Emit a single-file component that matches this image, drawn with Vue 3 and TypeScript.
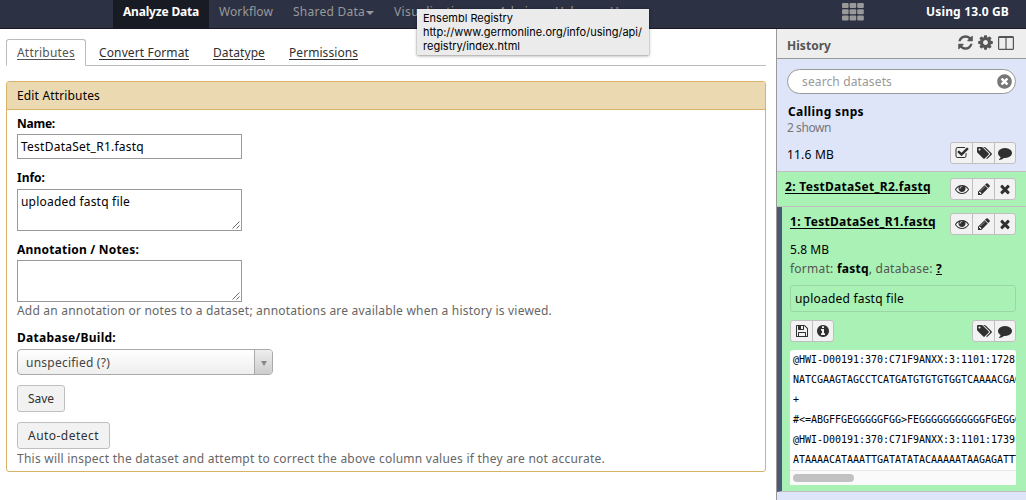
<script setup lang="ts">
import { ref, type Directive } from 'vue'

interface Fit { width: number }

/* Tracks a run of text so that it spans the given number of pixels. */
const vFit: Directive<HTMLElement, number> = {
  mounted(el, { value }) {
    const range = document.createRange()
    range.selectNodeContents(el)
    const count = (el.textContent ?? '').length
    const natural = range.getBoundingClientRect().width
    el.style.letterSpacing = `${((value - natural) / count).toFixed(3)}px`
  },
}

interface NavItem extends Fit { label: string; active?: boolean; caret?: boolean }
const nav: NavItem[] = [
  { label: 'Analyze Data', width: 76, active: true },
  { label: 'Workflow', width: 54 },
  { label: 'Shared Data', width: 72, caret: true },
  { label: 'Visualization', width: 76, caret: true },
  { label: 'Admin', width: 36 },
  { label: 'Help', width: 26, caret: true },
  { label: 'User', width: 25, caret: true },
]

interface Tab extends Fit { label: string; active?: boolean }
const tabs: Tab[] = [
  { label: 'Attributes', width: 58, active: true },
  { label: 'Convert Format', width: 90 },
  { label: 'Datatype', width: 52 },
  { label: 'Permissions', width: 69 },
]

const icons = {
  check: 'M1472 930v318q0 119-84.5 203.5t-203.5 84.5h-832q-119 0-203.5-84.5t-84.5-203.5v-832q0-119 84.5-203.5t203.5-84.5h832q63 0 117 25 15 7 18 23 3 17-9 29l-49 49q-10 10-23 10-3 0-9-2-23-6-45-6h-832q-66 0-113 47t-47 113v832q0 66 47 113t113 47h832q66 0 113-47t47-113v-254q0-13 9-22l64-64q10-10 23-10 6 0 12 3 20 8 20 29zm231-489l-814 814q-24 24-57 24t-57-24l-430-430q-24-24-24-57t24-57l110-110q24-24 57-24t57 24l263 263 647-647q24-24 57-24t57 24l110 110q24 24 24 57t-24 57z',
  tags: 'M576 448q0-53-37.5-90.5t-90.5-37.5-90.5 37.5-37.5 90.5 37.5 90.5 90.5 37.5 90.5-37.5 37.5-90.5zm1067 576q0 53-37 90l-491 492q-39 37-91 37-53 0-90-37l-715-716q-38-37-64.5-101t-26.5-117v-416q0-52 38-90t90-38h416q53 0 117 26.5t102 64.5l715 714q37 39 37 91zm384 0q0 53-37 90l-491 492q-39 37-91 37-36 0-59-14t-53-45l470-470q37-37 37-90 0-52-37-91l-715-714q-38-38-102-64.5t-117-26.5h224q53 0 117 26.5t102 64.5l715 714q37 39 37 91z',
  comment: 'M1792 896q0 174-120 321.5t-326 233-450 85.5q-70 0-145-8-198 175-460 242-49 14-114 22-17 2-30.5-9t-17.5-29v-1q-3-4-.5-12t2-10 4.5-9.5l6-9 7-8.5 8-9q7-8 31-34.5t34.5-38 31-39.5 32.5-51 27-59 26-76q-157-89-247.5-220t-90.5-281q0-174 120-321.5t326-233 450-85.5 450 85.5 326 233 120 321.5z',
  eye: 'M1664 960q-152-236-381-353 61 104 61 225 0 185-131.5 316.5t-316.5 131.5-316.5-131.5-131.5-316.5q0-121 61-225-229 117-381 353 133 205 333.5 326.5t434.5 121.5 434.5-121.5 333.5-326.5zm-720-384q0-20-14-34t-34-14q-125 0-214.5 89.5t-89.5 214.5q0 20 14 34t34 14 34-14 14-34q0-86 61-147t147-61q20 0 34-14t14-34zm848 384q0 34-20 69-140 230-376.5 368.5t-499.5 138.5-499.5-139-376.5-368q-20-35-20-69t20-69q140-229 376.5-368t499.5-139 499.5 139 376.5 368q20 35 20 69z',
  pencil: 'M491 1536l91-91-235-235-91 91v107h128v128h107zm523-928q0-22-22-22-10 0-17 7l-542 542q-7 7-7 17 0 22 22 22 10 0 17-7l542-542q7-7 7-17zm-54-192l416 416-832 832h-416v-416zm683 96q0 53-37 90l-166 166-416-416 166-165q36-38 90-38 53 0 91 38l235 234q37 39 37 91z',
  times: 'M1490 1322q0 40-28 68l-136 136q-28 28-68 28t-68-28l-294-294-294 294q-28 28-68 28t-68-28l-136-136q-28-28-28-68t28-68l294-294-294-294q-28-28-28-68t28-68l136-136q28-28 68-28t68 28l294 294 294-294q28-28 68-28t68 28l136 136q28 28 28 68t-28 68l-294 294 294 294q28 28 28 68z',
  save: 'M512 1536h768v-384h-768v384zm896 0h128v-896q0-14-10-38.5t-20-34.5l-281-281q-10-10-34-20t-39-10v416q0 40-28 68t-68 28h-576q-40 0-68-28t-28-68v-416h-128v1280h128v-416q0-40 28-68t68-28h832q40 0 68 28t28 68v416zm-384-928v-320q0-13-9.5-22.5t-22.5-9.5h-192q-13 0-22.5 9.5t-9.5 22.5v320q0 13 9.5 22.5t22.5 9.5h192q13 0 22.5-9.5t9.5-22.5zm640 32v928q0 40-28 68t-68 28h-1344q-40 0-68-28t-28-68v-1344q0-40 28-68t68-28h928q40 0 88 20t76 48l280 280q28 28 48 76t20 88z',
  info: 'M1152 1376v-160q0-14-9-23t-23-9h-96v-512q0-14-9-23t-23-9h-320q-14 0-23 9t-9 23v160q0 14 9 23t23 9h96v320h-96q-14 0-23 9t-9 23v160q0 14 9 23t23 9h448q14 0 23-9t9-23zm-128-896v-160q0-14-9-23t-23-9h-192q-14 0-23 9t-9 23v160q0 14 9 23t23 9h192q14 0 23-9t9-23zm640 416q0 209-103 385.5t-279.5 279.5-385.5 103-385.5-103-279.5-279.5-103-385.5 103-385.5 279.5-279.5 385.5-103 385.5 103 279.5 279.5 103 385.5z',
  clear: 'M1277 1122q0-26-19-45l-181-181 181-181q19-19 19-45 0-27-19-46l-90-90q-19-19-46-19-26 0-45 19l-181 181-181-181q-19-19-45-19-27 0-46 19l-90 90q-19 19-19 46 0 26 19 45l181 181-181 181q-19 19-19 45 0 27 19 46l90 90q19 19 46 19 26 0 45-19l181-181 181 181q19 19 45 19 27 0 46-19l90-90q19-19 19-46zm387-226q0 209-103 385.5t-279.5 279.5-385.5 103-385.5-103-279.5-279.5-103-385.5 103-385.5 279.5-279.5 385.5-103 385.5 103 279.5 279.5 103 385.5z',
  refresh: 'M1639 1056q0 5-1 7-64 268-268 434.5t-478 166.5q-146 0-282.5-55t-243.5-157l-129 129q-19 19-45 19t-45-19-19-45v-448q0-26 19-45t45-19h448q26 0 45 19t19 45-19 45l-137 137q71 66 161 102t187 36q134 0 250-65t186-179q11-17 53-117 8-23 30-23h192q13 0 22.5 9.5t9.5 22.5zm25-800v448q0 26-19 45t-45 19h-448q-26 0-45-19t-19-45 19-45l138-138q-148-137-349-137-134 0-250 65t-186 179q-11 17-53 117-8 23-30 23h-199q-13 0-22.5-9.5t-9.5-22.5v-7q65-268 270-434.5t480-166.5q146 0 284 55.5t245 156.5l130-129q19-19 45-19t45 19 19 45z',
  cog: 'M1152 896q0-106-75-181t-181-75-181 75-75 181 75 181 181 75 181-75 75-181zm512-109v222q0 12-8 23t-20 13l-185 28q-19 54-39 91 35 50 107 138 10 12 10 25t-9 23q-27 37-99 108t-94 71q-12 0-26-9l-138-108q-44 23-91 38-16 136-29 186-7 28-36 28h-222q-14 0-24.5-8.500t-11.500-21.500l-28-184q-49-16-90-37l-141 107q-10 9-25 9-14 0-25-11-126-114-165-168-7-10-7-23 0-12 8-23 15-21 51-66.500t54-70.500q-27-50-41-99l-183-27q-13-2-21-12.500t-8-23.500v-222q0-12 8-23t19-13l186-28q14-46 39-92-40-57-107-138-10-12-10-24 0-10 9-23 26-36 98.500-107.500t94.500-71.500q13 0 26 10l138 107q44-23 91-38 16-136 29-186 7-28 36-28h222q14 0 24.500 8.500t11.500 21.500l28 184q49 16 90 37l142-107q9-9 24-9 13 0 25 10 129 119 165 170 7 8 7 22 0 12-8 23-15 21-51 66.500t-54 70.500q26 50 41 98l183 28q13 2 21 12.500t8 23.500z',
} as const
type IconName = keyof typeof icons

const viewBox = (name: IconName): string => (name === 'tags' ? '0 0 2048 1792' : '0 0 1792 1792')

const historyActions: IconName[] = ['check', 'tags', 'comment']
const datasetActions: IconName[] = ['eye', 'pencil', 'times']
const fileActions: IconName[] = ['save', 'info']
const noteActions: IconName[] = ['tags', 'comment']

const name = ref('TestDataSet_R1.fastq')
const info = ref('uploaded fastq file')

const preview: string[] = [
  '@HWI-D00191:370:C71F9ANXX:3:1101:1728',
  'NATCGAAGTAGCCTCATGATGTGTGTGGTCAAAACGAG',
  '+',
  '#<=ABGFFGEGGGGGFGG>FEGGGGGGGGGGGFGEGGG',
  '@HWI-D00191:370:C71F9ANXX:3:1101:1739',
  'ATAAAACATAAATTGATATATACAAAAATAAGAGATTT',
]
</script>

<template>
  <div class="app">
    <header class="masthead">
      <nav class="nav">
        <a v-for="item in nav" :key="item.label" class="nav-item" :class="{ active: item.active }">
          <span v-fit="item.width">{{ item.label }}</span><i v-if="item.caret" class="caret"></i>
        </a>
      </nav>
      <svg class="grid-icon" width="22" height="18" viewBox="0 0 22 18">
        <template v-for="row in 3" :key="row">
          <rect v-for="col in 3" :key="col" :x="(col - 1) * 7.6" :y="(row - 1) * 6.2" width="6.6" height="5" rx="1" />
        </template>
      </svg>
      <span v-fit="83" class="quota">Using 13.0 GB</span>
    </header>

    <div class="body">
      <main class="center">
        <div class="tabs">
          <a v-for="tab in tabs" :key="tab.label" class="tab" :class="{ active: tab.active }"><span v-fit="tab.width">{{ tab.label }}</span></a>
        </div>

        <section class="form">
          <h1 class="form-title"><span v-fit="83">Edit Attributes</span></h1>
          <div class="form-body">
            <label class="label"><span v-fit="38">Name:</span></label>
            <div class="field input"><span v-fit="123">{{ name }}</span></div>

            <label class="label label-info"><span v-fit="28">Info:</span></label>
            <div class="field area">
              <span v-fit="109">{{ info }}</span>
              <svg class="grip" width="8" height="8" viewBox="0 0 8 8"><path d="M0.5 7.5l7-7M4.5 7.5l3-3" /></svg>
            </div>

            <label class="label label-note"><span v-fit="122">Annotation / Notes:</span></label>
            <div class="field area">
              <svg class="grip" width="8" height="8" viewBox="0 0 8 8"><path d="M0.5 7.5l7-7M4.5 7.5l3-3" /></svg>
            </div>
            <p class="help"><span v-fit="535">Add an annotation or notes to a dataset; annotations are available when a history is viewed.</span></p>

            <label class="label label-build"><span v-fit="99">Database/Build:</span></label>
            <div class="select">
              <span class="select-value"><span v-fit="84">unspecified (?)</span></span>
              <span class="select-arrow"><i></i></span>
            </div>

            <button class="button"><span v-fit="26">Save</span></button>
            <button class="button detect"><span v-fit="71">Auto-detect</span></button>
            <p class="help"><span v-fit="588">This will inspect the dataset and attempt to correct the above column values if they are not accurate.</span></p>
          </div>
        </section>
      </main>

      <aside class="history">
        <div class="history-head">
          <b v-fit="44">History</b>
          <div class="head-icons">
            <svg width="17" height="17" :viewBox="viewBox('refresh')"><path :d="icons.refresh" /></svg>
            <svg width="17" height="17" :viewBox="viewBox('cog')"><path :d="icons.cog" /></svg>
            <svg class="columns" width="16" height="14" viewBox="0 0 16 14">
              <path d="M1.500 0h13a1.500 1.500 0 0 1 1.500 1.500v11a1.500 1.500 0 0 1-1.500 1.500h-13a1.500 1.500 0 0 1-1.500-1.500v-11a1.500 1.500 0 0 1 1.500-1.500zM1.200 2v10.800h6.200v-10.800zM8.600 2v10.800h6.200v-10.800z" fill-rule="evenodd" />
            </svg>
          </div>
        </div>

        <div class="summary">
          <div class="search">
            <span v-fit="90">search datasets</span>
            <svg width="17" height="17" :viewBox="viewBox('clear')"><path :d="icons.clear" /></svg>
          </div>
          <div class="history-name"><b v-fit="76">Calling snps</b></div>
          <div class="shown"><span v-fit="44">2 shown</span></div>
          <div class="size-row">
            <span v-fit="47">11.6 MB</span>
            <div class="group">
              <span v-for="icon in historyActions" :key="icon" class="cell">
                <svg class="icon" :class="icon" :viewBox="viewBox(icon)"><path :d="icons[icon]" /></svg>
              </span>
            </div>
          </div>
        </div>

        <article class="dataset">
          <div class="dataset-head">
            <a v-fit="146" class="dataset-title">2: TestDataSet_R2.fastq</a>
            <div class="group">
              <span v-for="icon in datasetActions" :key="icon" class="cell">
                <svg class="icon" :class="icon" :viewBox="viewBox(icon)"><path :d="icons[icon]" /></svg>
              </span>
            </div>
          </div>
        </article>

        <article class="dataset selected">
          <div class="dataset-head">
            <a v-fit="146" class="dataset-title">1: TestDataSet_R1.fastq</a>
            <div class="group">
              <span v-for="icon in datasetActions" :key="icon" class="cell">
                <svg class="icon" :class="icon" :viewBox="viewBox(icon)"><path :d="icons[icon]" /></svg>
              </span>
            </div>
          </div>
          <div class="dataset-size"><span v-fit="39">5.8 MB</span></div>
          <div class="meta"><span v-fit="152">format: <b>fastq</b>, database: <b class="link">?</b></span></div>
          <div class="blurb"><span v-fit="109">{{ info }}</span></div>
          <div class="actions">
            <div class="group">
              <span v-for="icon in fileActions" :key="icon" class="cell">
                <svg class="icon" :class="icon" :viewBox="viewBox(icon)"><path :d="icons[icon]" /></svg>
              </span>
            </div>
            <div class="group">
              <span v-for="icon in noteActions" :key="icon" class="cell">
                <svg class="icon" :class="icon" :viewBox="viewBox(icon)"><path :d="icons[icon]" /></svg>
              </span>
            </div>
          </div>
          <div class="preview">
            <div v-for="(line, i) in preview" :key="i" class="line">{{ line }}</div>
            <div class="track"><i></i></div>
          </div>
        </article>
      </aside>
    </div>

    <div class="tooltip">
      <div><span v-fit="90">Ensembl Registry</span></div>
      <div><span v-fit="219">http://www.germonline.org/info/using/api/</span></div>
      <div><span v-fit="97">registry/index.html</span></div>
    </div>
  </div>
</template>

<style>
body {
  margin: 0;
  overflow: hidden;
}
</style>

<style scoped>
.app {
  position: relative;
  display: flex;
  flex-direction: column;
  width: 1026px;
  height: 500px;
  overflow: hidden;
  background: #fff;
  color: #000;
  font: 12px/16px "Noto Sans", "Open Sans", sans-serif;
  white-space: nowrap;
}
.app *, .app { box-sizing: border-box; }
svg { display: block; flex: none; }

.masthead {
  display: flex;
  flex: none;
  height: 29px;
  padding-right: 17px;
  border-bottom: 1px solid #191a24;
  background: #2c3143;
}
.nav { display: flex; width: 729px; margin-left: 113px; }
.nav-item {
  display: flex;
  align-items: flex-start;
  height: 28px;
  padding: 4px 10px 0;
  color: #999;
}
.nav-item.active { background: #191b24; color: #fff; font-weight: bold; }
.caret {
  margin: 7px 0 0 1px;
  border: 4px solid transparent;
  border-top-color: #999;
  border-bottom: 0;
}
.grid-icon { margin-top: 3px; fill: #999; }
.quota { margin: 4px 0 0 auto; color: #fff; font-weight: bold; width: 83px; }

.body { display: flex; flex: 1; min-height: 0; }
.center { width: 776px; padding: 10px 10px 0 6px; }
.tabs { display: flex; height: 27px; border-bottom: 1px solid #bbb; }
.tab {
  height: 27px;
  padding: 6px 12px 0;
  color: #303030;
  text-decoration: underline;
  text-underline-offset: 2px;
}
.tab.active {
  height: 27px;
  padding: 5px 10px 0;
  margin-right: 1px;
  border: 1px solid #bbb;
  border-bottom-color: #fff;
  border-radius: 3px 3px 0 0;
  background: #fff;
  color: #555;
}

.form {
  height: 391px;
  margin-top: 15px;
  border: 1px solid #d8b365;
  border-radius: 3px;
}
.form-title {
  height: 28px;
  margin: 0;
  padding: 6px 10px 0;
  border-bottom: 1px solid #d8b365;
  border-radius: 2px 2px 0 0;
  background: #ebd9b2;
  font: inherit;
}
.form-body { display: flex; flex-direction: column; align-items: flex-start; padding: 6px 10px 0; }
.label { height: 16px; margin-bottom: 2px; font-weight: bold; }
.label-info { margin: 11px 0 3px; }
.label-note { margin: 11px 0 2px; }
.label-build { margin: 11px 0 3px; }
.field {
  position: relative;
  width: 225px;
  border: 1px solid #999;
  padding: 4px 3px;
}
.input { height: 25px; }
.area { height: 42px; }
.grip {
  position: absolute;
  right: 1px;
  bottom: 1px;
  fill: none;
  stroke: #555;
  stroke-width: 0.9;
}
.help { margin: 0; height: 17px; padding-top: 1px; color: #666; }
.select {
  display: flex;
  width: 256px;
  height: 26px;
  margin-bottom: 10px;
  border: 1px solid #aaa;
  border-radius: 4px;
  overflow: hidden;
  background: linear-gradient(#fff, #eee);
  color: #444;
}
.select-value { flex: 1; padding: 5px 8px; }
.select-arrow {
  display: flex;
  align-items: center;
  justify-content: center;
  width: 18px;
  border-left: 1px solid #aaa;
  background: linear-gradient(#eee, #ccc);
}
.select-arrow i { margin-top: 3px; border: 3px solid transparent; border-top: 5px solid #888; border-bottom: 0; }
.button {
  height: 27px;
  margin: 0 0 10px;
  padding: 0 10px;
  border: 1px solid #bfbfbf;
  border-radius: 3px;
  background: #f2f2f2;
  color: #303030;
  font: inherit;
  text-align: left;
}
.detect { margin-bottom: 1px; }

.history { flex: 1; min-width: 0; border-left: 1px solid #999; background: #dfe5f9; }
.history-head {
  display: flex;
  justify-content: space-between;
  height: 30px;
  padding: 9px 12px 0 10px;
  border-bottom: 1px solid #999;
  background: #eee;
  color: #555;
}
.head-icons { display: flex; gap: 3px; margin-top: -4px; fill: #555; }
.columns { margin: 2px 0 0 1px; }
.summary { height: 113px; padding: 10px 10px 0; border-bottom: 1px solid #bfbfbf; }
.search {
  display: flex;
  align-items: center;
  justify-content: space-between;
  height: 25px;
  padding: 0 2px 0 14px;
  border: 1px solid #999;
  border-radius: 13px;
  background: #fff;
  color: #999;
}
.search svg { fill: #777; }
.history-name { margin-top: 10px; padding-left: 1px; }
.shown { color: #777; }
.size-row { display: flex; justify-content: space-between; margin-top: 6px; line-height: 25px; }
.group {
  display: flex;
  flex: none;
  height: 22px;
  border: 1px solid #bfbfbf;
  border-radius: 3px;
  background: #f2f2f2;
}
.cell { display: flex; align-items: center; justify-content: center; width: 22px; }
.cell:first-child { width: 21px; }
.cell:last-child { width: 21px; }
.cell + .cell { border-left: 1px solid #bfbfbf; }
.icon { width: 14px; height: 14px; fill: #303030; }
.icon.tags { width: 16px; }

.dataset { height: 35px; padding: 6px 10px 0 8px; border-bottom: 1px solid #bfbfbf; background: #a9f1b4; }
.dataset-head { display: flex; justify-content: space-between; height: 22px; }
.dataset-title { padding-top: 1px; font-weight: bold; text-decoration: underline; text-underline-offset: 2px; }
.selected { height: 285px; padding-left: 8px; border-left: 5px solid #4d5877; }
.dataset-size { margin-top: 7px; }
.meta { margin-top: 3px; color: #555; }
.meta b { color: #000; }
.link { text-decoration: underline; }
.blurb { height: 27px; margin-top: 8px; padding: 5px 4px; border: 1px solid #9dd6a6; border-radius: 3px; }
.actions { display: flex; justify-content: space-between; margin-top: 8px; }
.preview {
  height: 135px;
  margin-top: 8px;
  border-radius: 3px 3px 0 0;
  overflow: hidden;
  background: #fff;
  font: 10px/20px "DejaVu Sans Mono", monospace;
}
.line { height: 20px; padding-left: 3px; letter-spacing: -0.02px; }
.track { height: 15px; padding: 3px; border-top: 1px solid #e8e8e8; background: #fafafa; }
.track i { display: block; width: 61px; height: 8px; border-radius: 4px; background: #c1c1c1; }

.tooltip {
  position: absolute;
  left: 417px;
  top: 9px;
  width: 232px;
  height: 46px;
  padding: 2px 6px;
  background: #ebebec;
  box-shadow: 0 0 1px rgba(0, 0, 0, 0.35), 0 1px 3px rgba(0, 0, 0, 0.35);
  font: 11px/14px Inter, "Liberation Sans", sans-serif;
}
</style>
